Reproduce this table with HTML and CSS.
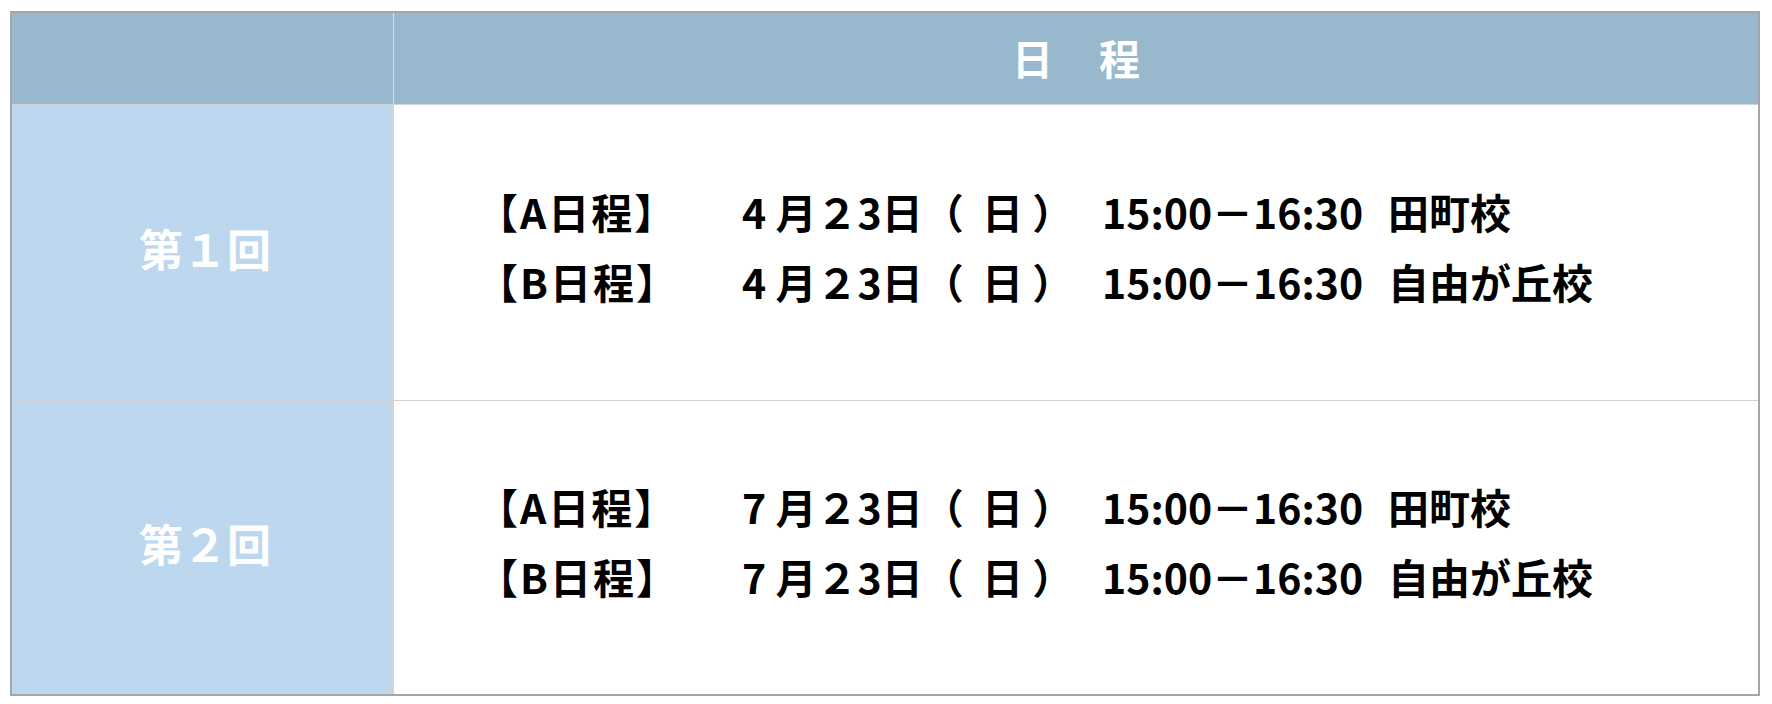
FILE: index.html
```html
<!DOCTYPE html>
<html lang="ja">
<head>
<meta charset="utf-8">
<link rel="stylesheet" href="styles.css">
</head>
<body>
<div class="page">
  <div class="schedule">
    <div class="cell head head-label"></div>
    <div class="cell head head-title"><span>日</span><span class="gap">　</span><span>程</span></div>

    <div class="cell label">第１回</div>
    <div class="cell content">
      <div class="line"><span class="tag">【A日程】</span><span>4 月２3日<span class="wd">（ </span>日 ）</span><span>15:00－16:30</span><span>田町校</span></div>
      <div class="line"><span class="tag">【B日程】</span><span>4 月２3日<span class="wd">（ </span>日 ）</span><span>15:00－16:30</span><span>自由が丘校</span></div>
    </div>

    <div class="cell label last">第２回</div>
    <div class="cell content last">
      <div class="line"><span class="tag">【A日程】</span><span>7 月２3日<span class="wd">（ </span>日 ）</span><span>15:00－16:30</span><span>田町校</span></div>
      <div class="line"><span class="tag">【B日程】</span><span>7 月２3日<span class="wd">（ </span>日 ）</span><span>15:00－16:30</span><span>自由が丘校</span></div>
    </div>
  </div>
</div>
</body>
</html>
```
FILE: styles.css
```css
html, body {
  margin: 0;
  padding: 0;
  background: #ffffff;
}
.page {
  padding: 11px 0 0 10px;
}
.schedule {
  width: 1746px;
  height: 681px;
  border: 2px solid #a6a6a6;
  display: grid;
  grid-template-columns: 382px 1fr;
  grid-template-rows: 92px 296px 293px;
  font-family: "Noto Sans CJK JP", "Noto Sans", sans-serif;
  font-weight: 700;
}
.cell {
  box-sizing: border-box;
  border-bottom: 1px solid #d2d2d2;
}
.cell.last {
  border-bottom: none;
}
.head {
  background: #98b9cd;
  border-bottom-color: #cdd5db;
}
.head-label {
  border-right: 1px solid #d3dde4;
}
.head-title {
  color: #ffffff;
  font-size: 41px;
  display: flex;
  align-items: center;
  justify-content: center;
  padding: 0 0 4px 0;
}
.head-title .gap {
  width: 46px;
  overflow: hidden;
}
.label {
  background: #bdd7ee;
  border-right: 2px solid #d3d3d3;
  color: #ffffff;
  font-size: 44px;
  display: flex;
  align-items: center;
  justify-content: center;
  padding: 0 0 10px 6px;
}
.content {
  background: #ffffff;
  display: flex;
  flex-direction: column;
  justify-content: center;
  padding: 0 0 14px 83px;
  color: #000000;
  font-size: 41px;
}
.line {
  display: grid;
  grid-template-columns: 265px 360px 286px auto;
  height: 70px;
  align-items: center;
  white-space: pre;
}
.tag {
  letter-spacing: 2px;
}
.wd {
  word-spacing: 9px;
}
```
